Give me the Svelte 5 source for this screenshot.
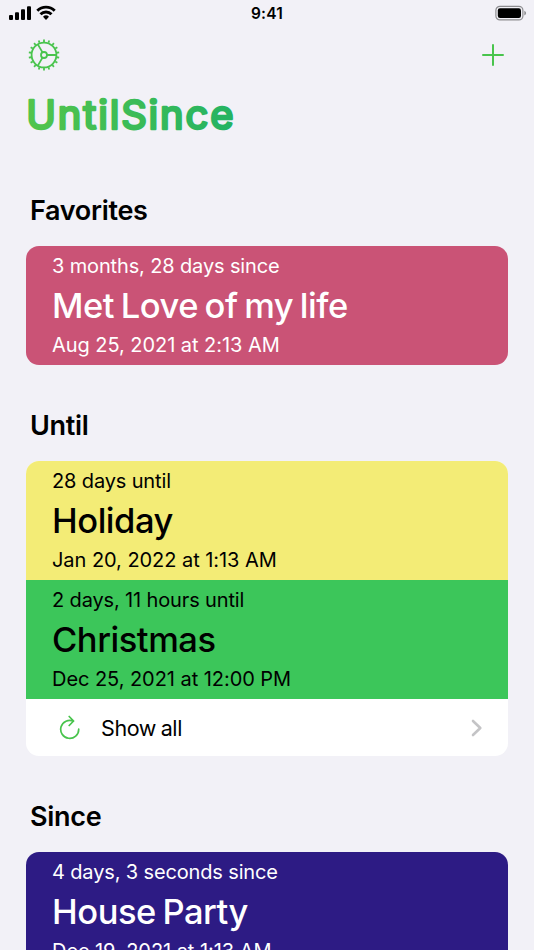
<script>
  const favorites = [
    { left: "3 months, 28 days since", name: "Met Love of my life", date: "Aug 25, 2021 at 2:13 AM", theme: "pink" },
  ];

  const until = [
    { left: "28 days until", name: "Holiday", date: "Jan 20, 2022 at 1:13 AM", theme: "yellow" },
    { left: "2 days, 11 hours until", name: "Christmas", date: "Dec 25, 2021 at 12:00 PM", theme: "green" },
  ];

  const since = [
    { left: "4 days, 3 seconds since", name: "House Party", date: "Dec 19, 2021 at 1:13 AM", theme: "indigo" },
  ];

  const sections = [
    { title: "Favorites", events: favorites, showAll: false },
    { title: "Until", events: until, showAll: true },
    { title: "Since", events: since, showAll: false },
  ];

  const teeth = Array.from({ length: 18 }, (_, i) => i * 20 + 10);
</script>

<main>
  <div class="status">
    <svg class="signal" width="48" height="28" viewBox="0 0 48 28">
      <rect x="0" y="15" width="4" height="5" rx="1" />
      <rect x="6" y="12.3" width="4" height="7.7" rx="1" />
      <rect x="12" y="9.3" width="4" height="10.7" rx="1" />
      <rect x="18" y="6.3" width="4" height="13.7" rx="1" />
      <g fill="none" stroke="#000" stroke-width="2.9">
        <path d="M28.3 10.7a12.3 12.3 0 0 1 17.4 0" />
        <path d="M31.5 14.2a7.8 7.8 0 0 1 11 0" />
      </g>
      <path d="M34 16.7a4.3 4.3 0 0 1 6 0L37 19.9z" />
    </svg>
    <span>9:41</span>
    <svg class="battery" width="32" height="28" viewBox="0 0 32 28">
      <rect x=".9" y="6.3" width="27" height="13.6" rx="4" fill="none" stroke="#8d8d90" stroke-width="1.2" />
      <rect x="2.8" y="8.2" width="23.2" height="9.8" rx="2.2" />
      <path d="M29.3 10.7q1.8.8 1.8 2.4t-1.8 2.4z" fill="#8d8d90" />
    </svg>
  </div>

  <nav>
    <button aria-label="Settings">
      <svg width="32" height="32" viewBox="-16 -16 32 32" fill="none" stroke="#49c44d" stroke-width="1.8">
        <circle r="12.4" />
        <circle r="3" />
        <path d="M3 0H12.6M-1.5 -2.6L-6.3 -10.9M-1.5 2.6L-6.3 10.9" />
        {#each teeth as angle}
          <path d="M13 0H15.4" transform="rotate({angle})" />
        {/each}
      </svg>
    </button>
    <button aria-label="Add">
      <svg width="24" height="24" viewBox="0 0 24 24" fill="none" stroke="#49c44d" stroke-width="2" stroke-linecap="round">
        <path d="M12 2V22M2 12H22" />
      </svg>
    </button>
  </nav>

  <h1>
    <svg width="216" height="50" viewBox="0 0 216 50">
      <defs>
        <linearGradient id="brand" gradientUnits="userSpaceOnUse" x1="0" y1="0" x2="212" y2="50">
          <stop offset="0" stop-color="#54c54b" />
          <stop offset="1" stop-color="#22b263" />
        </linearGradient>
      </defs>
      <text x="0.3" y="38" textLength="209" lengthAdjust="spacingAndGlyphs" fill="url(#brand)" stroke="url(#brand)">UntilSince</text>
    </svg>
  </h1>

  {#each sections as section}
    <section>
      <h2>{section.title}</h2>
      <div class="group">
        {#each section.events as event}
          <article class={event.theme}>
            <p>{event.left}</p>
            <h3>{event.name}</h3>
            <p class="date">{event.date}</p>
          </article>
        {/each}
        {#if section.showAll}
          <div class="all">
            <svg width="22" height="26" viewBox="0 0 22 26" fill="none" stroke="#49c44d" stroke-width="1.7" stroke-linecap="round" stroke-linejoin="round">
              <path d="M19.7 14.2A9 9 0 1 1 14.5 6.2M10.2 1.5L14.6 6L10.2 10.5" />
            </svg>
            <span>Show all</span>
            <svg class="chevron" width="12" height="18" viewBox="0 0 12 18" fill="none" stroke="#c4c4c6" stroke-width="2.6" stroke-linecap="round" stroke-linejoin="round">
              <path d="M2 2L9.3 9L2 16" />
            </svg>
          </div>
        {/if}
      </div>
    </section>
  {/each}
</main>

<style>
  :global(body) {
    margin: 0;
    overflow: hidden;
    background: #f2f1f7;
  }

  main {
    height: 950px;
    overflow: hidden;
    background: #f2f1f7;
    color: #000;
    font-family: Inter, "Liberation Sans", sans-serif;
  }

  h1, h2, h3, p {
    margin: 0;
  }

  svg {
    display: block;
  }

  .status {
    display: flex;
    justify-content: space-between;
    height: 28px;
    padding: 0 7px 0 9px;
  }

  .status span {
    font-size: 15.5px;
    font-weight: 600;
    line-height: 28px;
    letter-spacing: 0.2px;
    margin-right: 18px;
  }

  nav {
    display: flex;
    justify-content: space-between;
    align-items: center;
    height: 54px;
    padding: 0 29px 0 28px;
  }

  button {
    padding: 0;
    border: none;
    background: none;
  }

  h1 {
    height: 98px;
    padding: 9px 0 0 26px;
    box-sizing: border-box;
  }

  h1 text {
    font-size: 39px;
    font-weight: 400;
    letter-spacing: 1.8px;
    stroke-width: 2.6px;
    stroke-linejoin: round;
  }

  section {
    padding: 0 26px;
    margin-bottom: 30px;
  }

  h2 {
    height: 66px;
    padding-left: 4px;
    font-size: 27px;
    font-weight: 600;
    line-height: 61px;
    letter-spacing: -0.3px;
  }

  .group {
    overflow: hidden;
    border-radius: 13px;
    background: #fff;
  }

  article {
    height: 119px;
    padding: 6px 26px 0;
    box-sizing: border-box;
  }

  article p {
    font-size: 20px;
    line-height: 28px;
    letter-spacing: -0.14px;
    white-space: nowrap;
  }

  article .date {
    letter-spacing: -0.05px;
  }

  article h3 {
    margin-top: 1px;
    font-size: 34.5px;
    font-weight: 500;
    line-height: 50px;
    letter-spacing: -0.45px;
    word-spacing: -2.2px;
    white-space: nowrap;
  }

  .pink {
    background: #ca5376;
    color: #fff;
  }

  .yellow {
    background: #f3ec76;
  }

  .green {
    background: #3cc65a;
  }

  .indigo {
    background: #2d1b84;
    color: #fff;
  }

  .all {
    display: flex;
    align-items: center;
    height: 57px;
    padding: 0 25px 0 33px;
  }

  .all span {
    flex: 1;
    margin-left: 20px;
    font-size: 21.5px;
    letter-spacing: -0.4px;
    word-spacing: -1px;
  }
</style>
